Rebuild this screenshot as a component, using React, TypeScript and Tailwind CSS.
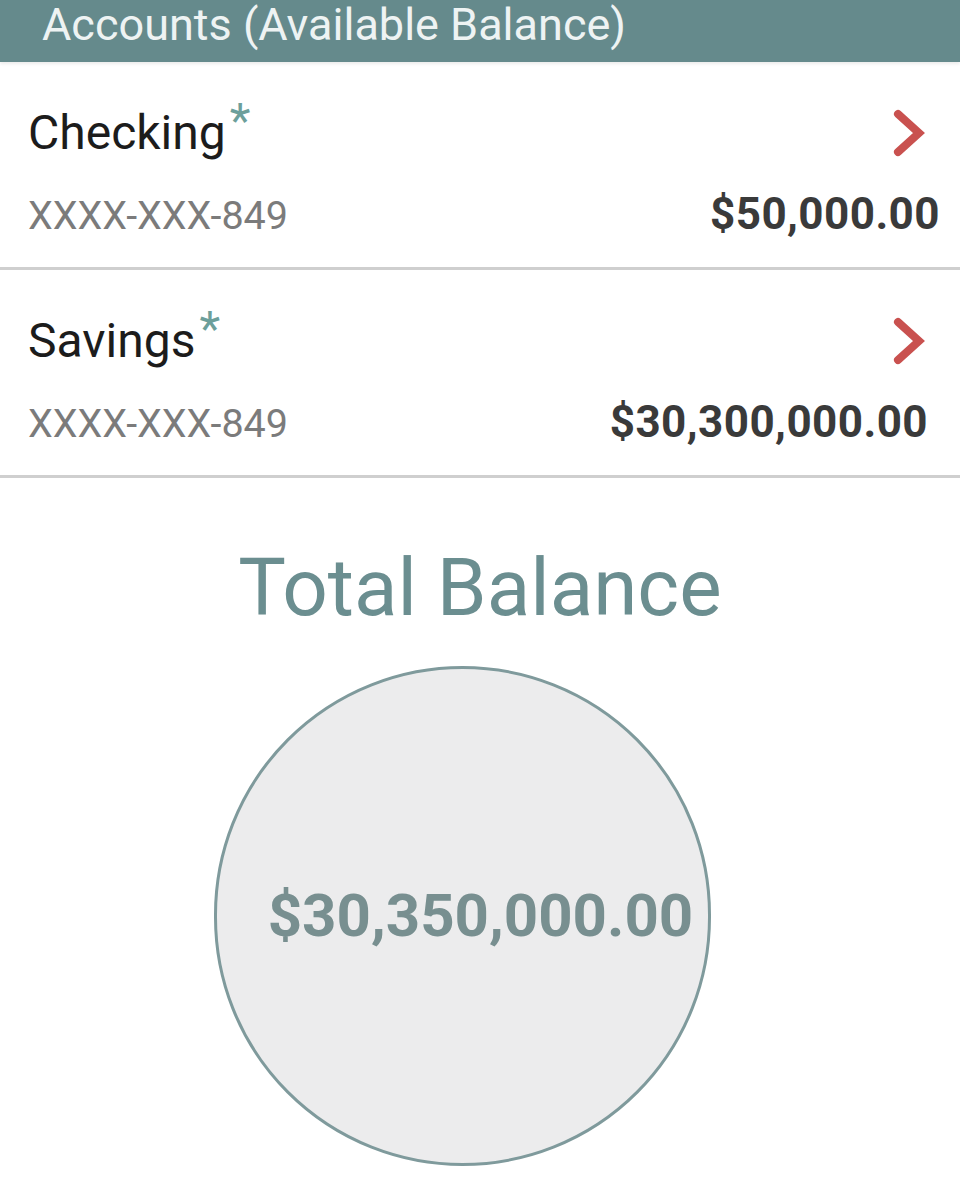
import React from 'react';

type Account = {
  name: string;
  number: string;
  balance: string;
  balanceClass: string;
};

const accounts: Account[] = [
  { name: 'Checking', number: 'XXXX-XXX-849', balance: '$50,000.00', balanceClass: 'mr-[20px] tracking-[0.01em]' },
  { name: 'Savings', number: 'XXXX-XXX-849', balance: '$30,300,000.00', balanceClass: 'mr-[32px] tracking-[0.01em]' },
];

const Chevron: React.FC = () => (
  <svg width="34" height="50" viewBox="0 0 34 50" className="shrink-0">
    <polyline points="7,6 28,25 7,44" fill="none" stroke="#c9514f" strokeWidth="8" strokeLinecap="round" strokeLinejoin="miter" />
  </svg>
);

const AccountRow: React.FC<{ account: Account }> = ({ account }) => (
  <div className="border-b-[3px] border-[#cfcfcf] pl-[28px] pt-[48px] pb-[31px]">
    <div className="flex h-[46px] items-center justify-between pr-[35px]">
      <div className="text-[48px] leading-none text-[#1c1c1c]">
        {account.name}
        <span className="relative top-[-12px] ml-[4px] text-[48px] text-[#6c9f9b]">*</span>
      </div>
      <Chevron />
    </div>
    <div className="mt-[36px] flex items-baseline justify-between">
      <span className="text-[39.5px] leading-none text-[#7b7b7b]">{account.number}</span>
      <span className={`text-[44px] font-bold leading-none text-[#3a3a3a] ${account.balanceClass}`}>
        {account.balance}
      </span>
    </div>
  </div>
);

export default function App() {
  return (
    <div className="min-h-[1200px] w-[960px] overflow-hidden bg-white font-['Roboto','Liberation_Sans',sans-serif]">
      <div className="flex h-[62px] items-start bg-[#658a8c] pl-[42px] shadow-[0_2px_3px_rgba(0,0,0,0.08)]">
        <span className="text-[45px] leading-[1.1] text-[#eef3f3]">Accounts (Available Balance)</span>
      </div>
      {accounts.map((a) => (
        <AccountRow key={a.name} account={a} />
      ))}
      <div className="flex flex-col">
        <div className="mt-[70px] text-center text-[80px] leading-none text-[#6b8e90]">Total Balance</div>
        <div className="ml-[214px] mt-[38px] flex h-[500px] w-[497px] items-center justify-center rounded-full border-[3px] border-[#7f9a9c] bg-[#ececed]">
          <span className="ml-[36px] text-[60px] font-bold leading-none text-[#788f90]">$30,350,000.00</span>
        </div>
      </div>
    </div>
  );
}
